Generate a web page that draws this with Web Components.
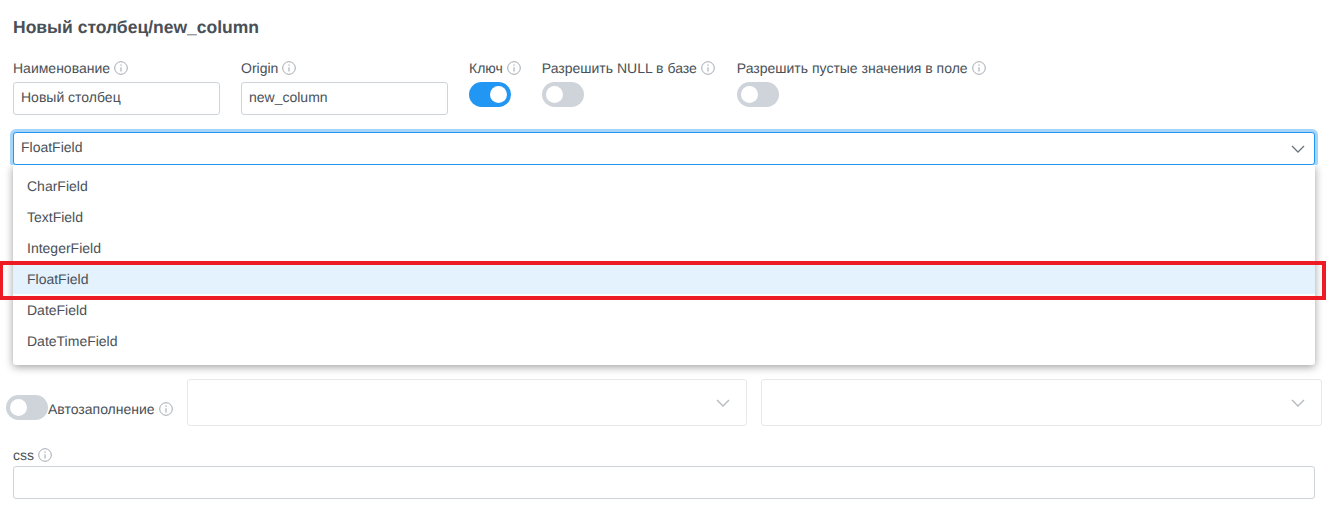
<!DOCTYPE html>
<html lang="ru">
<head>
<meta charset="utf-8">
<title>new_column</title>
<style>
  html, body { margin: 0; background: #fff; }
  body {
    font-family: "Liberation Sans", Arial, sans-serif;
    font-size: 14px;
    color: #495057;
    text-rendering: geometricPrecision;
  }
</style>
</head>
<body>
<column-form></column-form>

<script>
class InfoIcon extends HTMLElement {
  constructor() {
    super();
    this.attachShadow({ mode: "open" });
  }

  connectedCallback() {
    this.shadowRoot.innerHTML = /* html */`
    <style>
      :host { display: inline-flex; width: 14px; height: 14px; }
    </style>
    <svg width="14" height="14" viewBox="0 0 14 14" fill="none">
      <circle cx="7" cy="7" r="6.3" stroke="#a3a9b0" stroke-width="1"/>
      <path d="M7 6.2V10.4" stroke="#a3a9b0" stroke-width="1.1"/>
      <path d="M7 3.4V4.8" stroke="#a3a9b0" stroke-width="1.2"/>
    </svg>`;
  }
}

class ToggleSwitch extends HTMLElement {
  constructor() {
    super();
    this.attachShadow({ mode: "open" });
  }

  connectedCallback() {
    this.shadowRoot.innerHTML = /* html */`
    <style>
      :host {
        display: flex;
        flex: none;
        align-items: center;
        width: 42px;
        height: 25px;
        box-sizing: border-box;
        padding: 0 4px;
        border-radius: 13px;
        background: #ced4da;
      }
      :host([on]) {
        background: #2196f3;
        justify-content: flex-end;
      }
      .knob {
        width: 17px;
        height: 17px;
        border-radius: 50%;
        background: #fff;
      }
    </style>
    <div class="knob"></div>`;
  }
}

class FieldLabel extends HTMLElement {
  constructor() {
    super();
    this.attachShadow({ mode: "open" });
  }

  connectedCallback() {
    this.shadowRoot.innerHTML = /* html */`
    <style>
      :host {
        display: flex;
        align-items: center;
        gap: 4px;
        height: 16px;
        line-height: 16px;
        white-space: nowrap;
        color: #495057;
      }
    </style>
    <slot></slot><info-icon></info-icon>`;
  }
}

class TextBox extends HTMLElement {
  constructor() {
    super();
    this.attachShadow({ mode: "open" });
  }

  connectedCallback() {
    this.shadowRoot.innerHTML = /* html */`
    <style>
      :host {
        display: flex;
        align-items: center;
        height: 33px;
        box-sizing: border-box;
        padding: 0 7px 3px;
        border: 1px solid #ced4da;
        border-radius: 3px;
        background: #fff;
        color: #495057;
      }
    </style>
    <slot></slot>`;
  }
}

class SelectBox extends HTMLElement {
  constructor() {
    super();
    this.attachShadow({ mode: "open" });
  }

  connectedCallback() {
    this.shadowRoot.innerHTML = /* html */`
    <style>
      :host {
        display: flex;
        flex: none;
        align-items: center;
        justify-content: space-between;
        height: 33px;
        box-sizing: border-box;
        padding: 0 9px 0 7px;
        border: 1px solid #ced4da;
        border-radius: 3px;
        background: #fff;
        color: #495057;
      }
      :host([open]) {
        border-color: #2196f3;
        box-shadow: 0 0 0 3px #a6d5fa;
        clip-path: inset(-3px -3px 0 -3px);
      }
      :host([disabled]) {
        height: 47px;
        padding-right: 16px;
        border-color: #e6e8eb;
      }
      :host([disabled]) path { stroke: #b4b9bf; }
      span { margin-top: -3px; }
      svg { flex: none; }
    </style>
    <span><slot></slot></span>
    <svg width="14" height="8" viewBox="0 0 14 8" fill="none">
      <path d="M1 1L7 7L13 1" stroke="#6c757d" stroke-width="1.3"/>
    </svg>`;
  }
}

class DropMenu extends HTMLElement {
  constructor() {
    super();
    this.attachShadow({ mode: "open" });
  }

  connectedCallback() {
    this.shadowRoot.innerHTML = /* html */`
    <style>
      :host {
        position: absolute;
        top: 100%;
        left: 0;
        right: 0;
        z-index: 2;
        box-sizing: border-box;
        padding: 5px 0 9px;
        border-radius: 0 0 3px 3px;
        background: #fff;
        box-shadow: 0 2px 8px rgba(0, 0, 0, .38);
        clip-path: inset(0 -14px -14px -14px);
      }
    </style>
    <slot></slot>`;
  }
}

class DropOption extends HTMLElement {
  constructor() {
    super();
    this.attachShadow({ mode: "open" });
  }

  connectedCallback() {
    this.shadowRoot.innerHTML = /* html */`
    <style>
      :host {
        display: flex;
        align-items: center;
        height: 31px;
        padding-left: 14px;
        color: #495057;
      }
      :host([selected]) { background: #e3f2fd; }
    </style>
    <slot></slot>`;
  }
}

class ColumnForm extends HTMLElement {
  constructor() {
    super();
    this.attachShadow({ mode: "open" });
  }

  static get styles() {
    return /* css */`
      :host {
        display: block;
        position: relative;
        width: 1330px;
        height: 510px;
        overflow: hidden;
        box-sizing: border-box;
        padding: 0 15px 0 13px;
      }

      h1 {
        margin: 0;
        padding-top: 18px;
        height: 42px;
        box-sizing: content-box;
        font-size: 17.5px;
        line-height: 18px;
        font-weight: bold;
        color: #495057;
      }

      .top {
        display: flex;
        margin-top: 0;
      }

      .top > div {
        display: flex;
        flex-direction: column;
        gap: 6px;
      }

      .name { width: 207px; margin-right: 21px; }
      .key { margin-right: 21px; }
      .nullable { margin-right: 22px; }

      .type {
        display: block;
        position: relative;
        margin-top: 17px;
      }

      .auto {
        display: flex;
        align-items: center;
        margin: 214px -7px 0 -7px;
      }

      .auto field-label { margin-right: 14px; margin-top: 13px; }
      .auto toggle-switch { margin-top: 10px; }
      .auto select-box { width: 560px; }
      .auto select-box + select-box { width: 561px; margin-left: 14px; }

      .css {
        display: flex;
        flex-direction: column;
        gap: 3px;
        margin-top: 21px;
      }

      .callout {
        position: absolute;
        left: 0;
        top: 261px;
        width: 1326px;
        height: 39px;
        box-sizing: border-box;
        border: 4px solid #ed1c24;
        border-width: 4px 4px 4px 3px;
        z-index: 3;
      }
    `;
  }

  connectedCallback() {
    this.render();
  }

  render() {
    this.shadowRoot.innerHTML = /* html */`
    <style>${ColumnForm.styles}</style>
    <h1>Новый столбец/new_column</h1>
    <div class="top">
      <div class="name">
        <field-label>Наименование</field-label>
        <text-box>Новый столбец</text-box>
      </div>
      <div class="name">
        <field-label>Origin</field-label>
        <text-box>new_column</text-box>
      </div>
      <div class="key">
        <field-label>Ключ</field-label>
        <toggle-switch on></toggle-switch>
      </div>
      <div class="nullable">
        <field-label>Разрешить NULL в базе</field-label>
        <toggle-switch></toggle-switch>
      </div>
      <div>
        <field-label>Разрешить пустые значения в поле</field-label>
        <toggle-switch></toggle-switch>
      </div>
    </div>
    <div class="type">
      <select-box open>FloatField</select-box>
      <drop-menu>
        <drop-option>CharField</drop-option>
        <drop-option>TextField</drop-option>
        <drop-option>IntegerField</drop-option>
        <drop-option selected>FloatField</drop-option>
        <drop-option>DateField</drop-option>
        <drop-option>DateTimeField</drop-option>
      </drop-menu>
    </div>
    <div class="auto">
      <toggle-switch></toggle-switch>
      <field-label>Автозаполнение</field-label>
      <select-box disabled></select-box>
      <select-box disabled></select-box>
    </div>
    <div class="css">
      <field-label>css</field-label>
      <text-box></text-box>
    </div>
    <div class="callout"></div>`;
  }
}

customElements.define("info-icon", InfoIcon);
customElements.define("toggle-switch", ToggleSwitch);
customElements.define("field-label", FieldLabel);
customElements.define("text-box", TextBox);
customElements.define("select-box", SelectBox);
customElements.define("drop-menu", DropMenu);
customElements.define("drop-option", DropOption);
customElements.define("column-form", ColumnForm);
</script>
</body>
</html>
